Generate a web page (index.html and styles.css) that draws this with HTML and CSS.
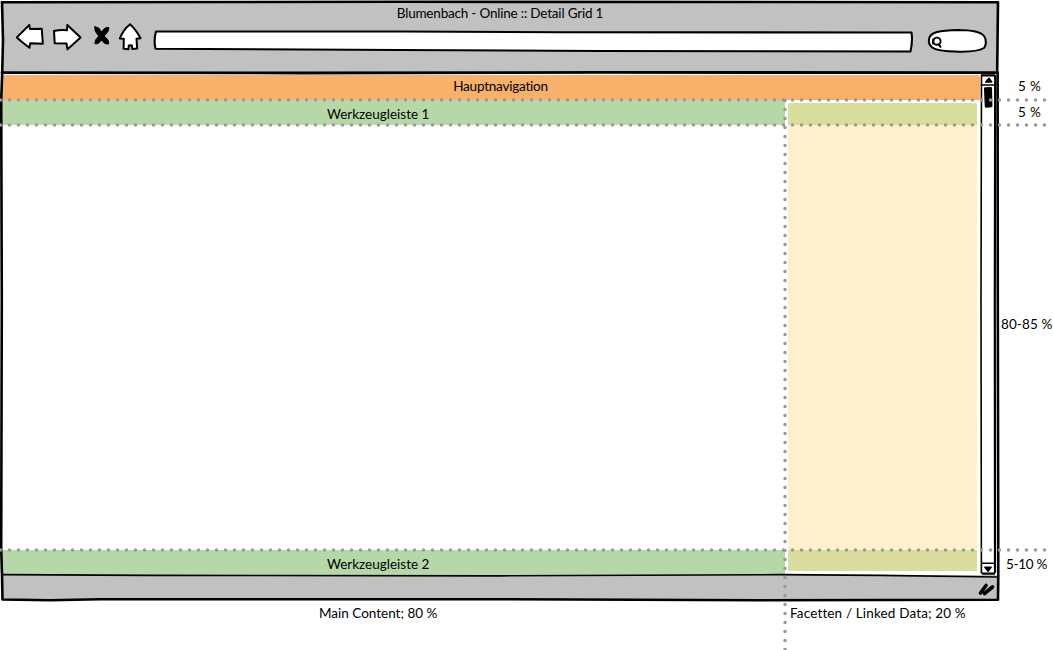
FILE: index.html
```html
<!DOCTYPE html>
<html lang="de">
<head>
<meta charset="utf-8">
<title>Blumenbach - Online :: Detail Grid 1</title>
<link rel="stylesheet" href="styles.css">
</head>
<body>
<div class="board">
  <div class="upper">
    <main class="browser">
      <header class="chrome"><h1 class="title">Blumenbach - Online :: Detail Grid 1</h1></header>
      <div class="viewport">
        <div class="page">
          <nav class="nav"><span class="t-nav">Hauptnavigation</span></nav>
          <div class="columns">
            <section class="main">
              <div class="tools"><span class="t-tool">Werkzeugleiste 1</span></div>
              <div class="content"></div>
              <div class="tools tools-bottom"><span class="t-tool">Werkzeugleiste 2</span></div>
            </section>
            <aside class="facets">
              <div class="facet-top"></div>
              <div class="facet-body"></div>
              <div class="facet-bottom"></div>
            </aside>
          </div>
        </div>
      </div>
      <footer class="status"></footer>
    </main>
    <div class="heights">
      <span class="h-nav">5 %</span>
      <span class="h-tool">5 %</span>
      <span class="h-body">80-85 %</span>
      <span class="h-foot">5-10 %</span>
    </div>
  </div>
  <div class="widths">
    <span class="w-main">Main Content; 80 %</span>
    <span class="w-facets">Facetten / Linked Data; 20 %</span>
  </div>
  <svg class="sketch" viewBox="0 0 1053 650" fill="none" stroke="#000" stroke-linecap="round" stroke-linejoin="round">
    <!-- window frame -->
    <path stroke-width="2.6" d="M2 2.2L400 1.8L998 2.2L997.2 70"/>
    <path stroke-width="2.6" d="M2 2.2L3 40L2.2 73L1.2 100L1.8 300L1.2 548L2 575L2.5 599.5L50 600.2L100 599.2L500 599.2L760 600.2L998 599.8L998.3 575L997.8 300L997.6 72"/>
    <path stroke-width="2.8" d="M2 72.7L300 73L600 72.4L997 72.6"/>
    <path stroke-width="1.7" d="M2 574.6L150 575.4L500 575.8L780 574.7L880 575.3L998 577"/>
    <!-- toolbar arrows, stop, home -->
    <g fill="#fff" stroke-width="2">
      <path d="M16.8 37.4L29.3 25L30 29L41.8 28.8L42.8 43.8L30.2 43.2L29.4 47.7L22 42Z"/>
      <path d="M54 31Q60 29.5 67 30.2L67.3 25L80.6 37.4L67.5 49.3L66.5 43.4L54.7 43.2Z"/>
      <path d="M130 24.2Q136 29.5 140.5 38.2L136.5 38.8L137.2 48.6L132.2 49L131.8 45.2L128.8 45.4L128.5 49.2L123.6 48.8L123.8 38.8L119.8 38.5Q123 30 130 24.2Z"/>
      <path stroke-width="2.1" d="M156 31.5L400 31.5L560 32.2L911.5 32.5Q912.8 41 910.5 51.5L600 51L400 50L155.5 48.8Q153.5 40 156 31.5Z"/>
      <path d="M929 39C930 32 940 30.5 958 30C973 30 981 32 984 36C987 40 986 46 984 48C977 52 965 52 955 51.5C938 51 927 49 929 39Z"/>
    </g>
    <path fill="#000" stroke-width="1" d="M95 26.8Q99 26.5 101.5 32Q105 26.5 109 27.5Q109.5 31 104 36Q109.5 40 108.5 44Q105 45 101.3 40Q98 45 94.8 43.5Q94.8 39.5 98.8 36Q93.8 31 95 26.8Z"/>
    <circle cx="937" cy="41.2" r="3.6" stroke-width="1.9"/>
    <path stroke-width="2" d="M933.2 39.5L933 43.5M938.5 44.2L940.5 46.8"/>
    <!-- scrollbar -->
    <path stroke-width="1.6" d="M981.5 75L981 300L981.4 573M981 84.8L994 85M982 563L994 563.2"/>
    <path stroke-width="2.2" stroke-linecap="butt" d="M995.2 75L994.8 300L995 573M981 75.4H995M982 573.6H995"/>
    <path fill="#000" stroke-width="1.4" d="M989 78.2L991.8 82H985.6ZM984.8 567.2H991.2L988.2 571.3Z"/>
    <path fill="#000" stroke-width="2.5" d="M985.2 88.5L990.8 88.2L991.2 106L986 106.4Z"/>
    <path stroke-width="3.6" d="M980.5 593L986 585.5M984.5 593.5L992.5 587"/>
    <!-- grid guides -->
    <g stroke="#999" stroke-width="3.5" stroke-dasharray="0 9">
      <path d="M.5 100H1048M.5 125H1048M.5 550H1048"/>
      <path d="M785 100.5V127M785 127.6V551M785 559.6V650"/>
    </g>
  </svg>
</div>
</body>
</html>
```
FILE: styles.css
```css
* { box-sizing: border-box; }
body { margin: 0; background: #fff; color: #000; font: 13.5px/20px Lato, "Liberation Sans", sans-serif; font-variant-ligatures: none; }
.board { position: relative; width: 1053px; height: 650px; overflow: hidden; display: flex; flex-direction: column; }
.upper { display: flex; height: 601px; }
.browser { width: 999px; display: flex; flex-direction: column; padding: 2px 1px 1px 2px; }
.chrome { height: 71px; background: #c1c1c1; padding-top: 1px; text-align: center; }
.title { margin: 0; font: inherit; letter-spacing: -0.2px; }
.viewport { height: 502px; padding-top: 2px; }
.page { width: 978px; height: 500px; display: flex; flex-direction: column; }
.nav { height: 25px; background: #f7b16b; border-radius: 0 2px 0 0; text-align: center; padding: 1px 0 0 19px; letter-spacing: -0.22px; }
.columns { flex: 1; display: flex; }
.main { width: 783px; display: flex; flex-direction: column; }
.tools { height: 25px; background: #b6d8a8; padding: 4px 0 0 325px; }
.content { flex: 1; }
.facets { flex: 1; padding: 3px 3px 4px 3px; display: flex; flex-direction: column; }
.facet-top { height: 22px; background: #d9de9f; border-radius: 2px 2px 0 0; }
.facet-body { flex: 1; background: #fff0cd; }
.facet-bottom { height: 21px; background: #d9de9f; }
.status { height: 25px; background: #c1c1c1; }
.heights { width: 54px; display: flex; flex-direction: column; white-space: nowrap; }
.h-nav { margin: 76px 0 0 19px; letter-spacing: .4px; }
.h-tool { margin: 6px 0 0 19px; letter-spacing: .4px; }
.h-body { margin: 192px 0 0 2px; letter-spacing: .1px; }
.h-foot { margin: 220px 0 0 7px; letter-spacing: -.3px; }
.widths { display: flex; padding-top: 2px; white-space: nowrap; }
.w-main { width: 471px; padding-left: 319px; box-sizing: content-box; }
.w-facets { letter-spacing: .15px; }
.sketch { position: absolute; inset: 0; width: 1053px; height: 650px; pointer-events: none; }
```
